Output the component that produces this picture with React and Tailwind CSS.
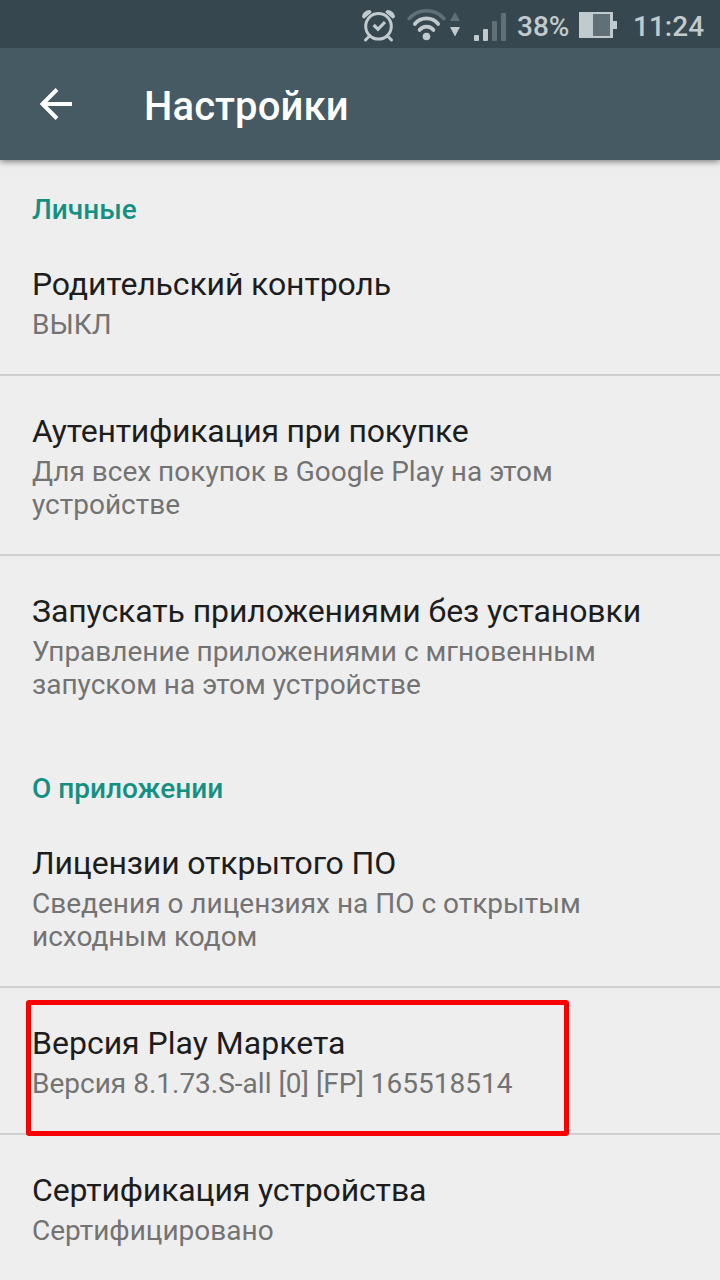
import React from 'react';

const sections = [
  {
    title: 'Личные',
    items: [
      { title: 'Родительский контроль', tracking: 'tracking-[-0.13px]', lines: ['ВЫКЛ'] },
      {
        title: 'Аутентификация при покупке',
        tracking: 'tracking-[-0.23px]',
        lines: ['Для всех покупок в Google Play на этом', 'устройстве'],
      },
      {
        title: 'Запускать приложениями без установки',
        tracking: 'tracking-[-0.1px]',
        lines: ['Управление приложениями с мгновенным', 'запуском на этом устройстве'],
      },
    ],
  },
  {
    title: 'О приложении',
    items: [
      {
        title: 'Лицензии открытого ПО',
        tracking: 'tracking-[-0.15px]',
        lines: ['Сведения о лицензиях на ПО с открытым', 'исходным кодом'],
      },
      {
        title: 'Версия Play Маркета',
        tracking: 'tracking-normal',
        lines: ['Версия 8.1.73.S-all [0] [FP] 165518514'],
        highlighted: true,
      },
      { title: 'Сертификация устройства', tracking: 'tracking-[-0.13px]', lines: ['Сертифицировано'] },
    ],
  },
];

const AlarmIcon = () => (
  <svg width="36" height="36" viewBox="0 0 36 36" fill="none" stroke="#c1cacd" strokeWidth="3" className="shrink-0">
    <circle cx="17.5" cy="19.3" r="12.8" />
    <path d="M12.7 18l4.300 4.300 7-7.300" strokeWidth="3.2" />
    <path d="M8.500 29l-4 4M26.500 29l4 4" strokeLinecap="round" />
    <path d="M2 9.500C2.500 6.500 5 4 8.500 4L9.500 5 3 10.500z" strokeWidth="2" strokeLinejoin="round" fill="#c1cacd" />
    <path d="M33 9.500C32.500 6.500 30 4 26.500 4L25.500 5 32 10.500z" strokeWidth="2" strokeLinejoin="round" fill="#c1cacd" />
  </svg>
);

const WifiIcon = () => (
  <svg width="54" height="36" viewBox="0 0 54 36" fill="none" strokeWidth="3.6" strokeLinecap="round" className="shrink-0">
    <path d="M2.200 11.500A23.300 23.300 0 0 1 36.800 11.500" stroke="#617077" />
    <path d="M7.800 17A15 15 0 0 1 31.200 17" stroke="#c1cacd" />
    <path d="M12.500 23A9 9 0 0 1 26.500 23" stroke="#c1cacd" />
    <circle cx="19.500" cy="29.500" r="3.8" fill="#c1cacd" />
    <path d="M43 14l5-9 5 9z" fill="#617077" />
    <path d="M43 20h10l-5 9.500z" fill="#c1cacd" />
  </svg>
);

const SignalIcon = () => (
  <svg width="34" height="30" viewBox="0 0 34 30" className="shrink-0">
    <rect x="1" y="23" width="5" height="6" rx="1" fill="#c1cacd" />
    <rect x="10" y="17" width="5" height="12" rx="1" fill="#c1cacd" />
    <rect x="19" y="9" width="5" height="20" rx="1" fill="#617077" />
    <rect x="28" y="1" width="5" height="28" rx="1" fill="#617077" />
  </svg>
);

const BatteryIcon = () => (
  <svg width="38" height="26" viewBox="0 0 38 26" className="shrink-0">
    <path d="M0 0h34v9h4v8h-4v9H0z" fill="#c1cacd" />
    <rect x="14" y="2" width="17" height="22" fill="#617077" />
  </svg>
);

const StatusBar = () => (
  <div className="relative z-10 h-12 bg-[#37474f] flex items-start text-[#c1cacd] text-[28px] leading-[33px] font-medium">
    <div className="pl-[361px] pt-[7px]"><AlarmIcon /></div>
    <div className="pl-[10px] pt-[7px]"><WifiIcon /></div>
    <div className="pl-[12px] pt-[12px]"><SignalIcon /></div>
    <div className="pl-[10px] pt-[10px] w-[72px] whitespace-nowrap">38%</div>
    <div className="pt-[12px]"><BatteryIcon /></div>
    <div className="pl-[16px] pt-[10px] whitespace-nowrap">11:24</div>
  </div>
);

const Toolbar = () => (
  <div className="h-28 bg-[#455a62] flex items-center shadow-[0_2px_6px_rgba(0,0,0,0.45)]">
    <svg width="34" height="34" viewBox="0 0 34 34" fill="none" stroke="#fff" strokeWidth="4" className="ml-[39px] shrink-0">
      <path d="M33 17H4M18 2.500L3.500 17L18 31.500" />
    </svg>
    <h1 className="ml-[71px] pt-[6px] text-[40px] leading-[48px] font-medium tracking-[0.1px] text-white">Настройки</h1>
  </div>
);

const SettingsItem = ({ item, divider }) => (
  <div className={divider ? 'relative pl-8 pt-9 pb-[33px] border-b-2 border-[#cfcfcf]' : 'relative pl-8 pt-9 pb-[33px]'}>
    <div className={`text-[32px] leading-[38px] text-[#1d1d1d] whitespace-nowrap ${item.tracking}`}>{item.title}</div>
    <div className="pt-[5px] text-[28px] leading-[33px] text-[#737373] whitespace-nowrap">
      {item.lines.map((line) => (
        <div key={line}>{line}</div>
      ))}
    </div>
    {item.highlighted && (
      <div className="absolute left-[26px] top-[12px] w-[543px] h-[136px] border-[5px] border-[#fb0000] rounded-[3px] z-10"></div>
    )}
  </div>
);

const App = () => {
  return (
    <div className="w-[720px] h-[1280px] overflow-hidden bg-[#eeeeee] font-['Roboto',sans-serif]">
      <StatusBar />
      <Toolbar />
      {sections.map((section, index) => (
        <div key={section.title}>
          <h2 className={index === 0 ? 'h-[69px] pl-8 pt-[33px] text-[28px] leading-[33px] font-medium text-[#149083]' : 'h-[74px] pl-8 pt-[38px] text-[28px] leading-[33px] font-medium text-[#149083]'}>
            {section.title}
          </h2>
          {section.items.map((item, i) => (
            <SettingsItem key={item.title} item={item} divider={i < section.items.length - 1} />
          ))}
        </div>
      ))}
    </div>
  );
};

export default App;
